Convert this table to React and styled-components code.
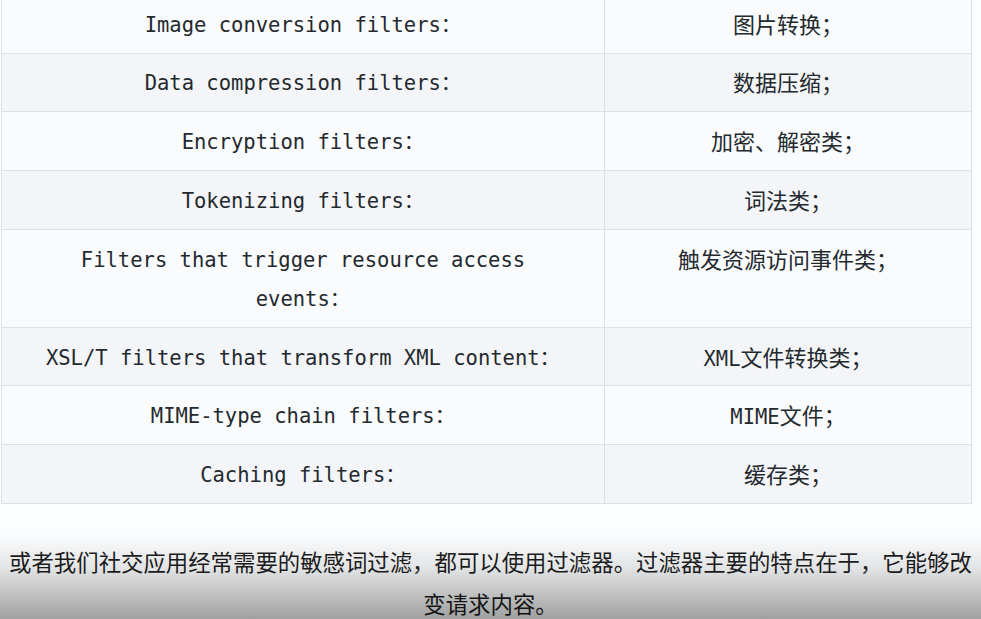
import styled, { createGlobalStyle } from 'styled-components';

const GlobalStyle = createGlobalStyle`
  html, body {
    margin: 0;
    padding: 0;
    background: #fcfdfe;
    overflow: hidden;
  }
`;

const Page = styled.main`
  position: relative;
  width: 981px;
  height: 619px;
  overflow: hidden;
  background: #fcfdfe;
`;

const Table = styled.table`
  margin: -6px 0 0 1px;
  width: 971px;
  border-collapse: collapse;
  table-layout: fixed;
  font-family: 'DejaVu Sans Mono', 'Liberation Mono', 'Noto Sans CJK SC', monospace;
  font-size: 20.5px;
  line-height: 39.3px;
  color: #24292e;
`;

const Row = styled.tr`
  height: ${({ $tall }) => ($tall ? '98px' : '58.7px')};
  background: ${({ $even }) => ($even ? '#f3f5f8' : '#f9fbfd')};
`;

const Cell = styled.td`
  box-sizing: border-box;
  padding: 10.8px 40px 0;
  border: 1px solid #dde1e6;
  text-align: center;
  vertical-align: top;
  font-size: ${({ $cjk }) => ($cjk ? '22px' : '20.5px')};
`;

const Code = styled.span`
  font-size: 20.5px;
  line-height: 1;
`;

const Note = styled.p`
  margin: 36px 0 0;
  font-family: 'Noto Sans CJK SC', sans-serif;
  font-size: 22.4px;
  line-height: 42px;
  color: #1e1e1e;
  text-align: center;
`;

const Shade = styled.div`
  position: absolute;
  left: 0;
  right: 0;
  bottom: 0;
  height: 85px;
  pointer-events: none;
  background: linear-gradient(to bottom, rgba(0, 0, 0, 0) 0%, rgba(0, 0, 0, 0.1) 40%, rgba(0, 0, 0, 0.37) 100%);
`;

const rows = [
  ['Image conversion filters：', ['', '图片转换；']],
  ['Data compression filters：', ['', '数据压缩；']],
  ['Encryption filters：', ['', '加密、解密类；']],
  ['Tokenizing filters：', ['', '词法类；']],
  ['Filters that trigger resource access events：', ['', '触发资源访问事件类；'], true],
  ['XSL/T filters that transform XML content：', ['XML', '文件转换类；']],
  ['MIME-type chain filters：', ['MIME', '文件；']],
  ['Caching filters：', ['', '缓存类；']],
];

export default function App() {
  return (
    <Page>
      <GlobalStyle />
      <Table>
        <colgroup>
          <col style={{ width: '603px' }} />
          <col />
        </colgroup>
        <tbody>
          {rows.map(([name, [code, desc], tall], i) => (
            <Row key={i} $even={i % 2 === 1} $tall={tall}>
              <Cell>{name}</Cell>
              <Cell $cjk>
                {code && <Code>{code}</Code>}
                {desc}
              </Cell>
            </Row>
          ))}
        </tbody>
      </Table>
      <Note>
        或者我们社交应用经常需要的敏感词过滤，都可以使用过滤器。过滤器主要的特点在于，它能够改变请求内容。
      </Note>
      <Shade />
    </Page>
  );
}
